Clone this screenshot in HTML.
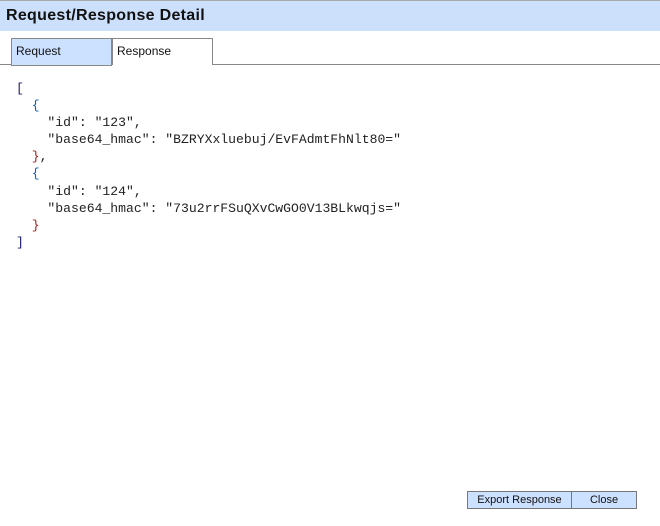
<!DOCTYPE html>
<html><head><style>
body{margin:0;width:660px;height:526px;background:#fff;position:relative;overflow:hidden;font-family:"Liberation Sans",sans-serif}
.hdr{position:absolute;left:0;top:0;width:660px;height:31px;background:#cde0fb;border-top:1px solid #a8a8a8;box-sizing:border-box}
.hdr span{position:absolute;left:6px;top:6px;font-size:16px;font-weight:bold;color:#111;letter-spacing:0.3px}
.line{position:absolute;left:0;top:64px;width:660px;height:1px;background:#888}
.tab{position:absolute;top:38px;height:28px;box-sizing:border-box;border:1px solid #888;font-size:12px;padding:5px 0 0 4px;color:#111}
.t1{left:11px;width:101px;background:#cce0ff}
.t2{left:112px;width:101px;background:#fff;border-bottom:none;height:27px}
pre{position:absolute;left:16px;top:80px;margin:0;font-family:"Liberation Mono",monospace;font-size:13.1px;line-height:17.1px;color:#222}
.a{color:#1c1c6c}.b{color:#1060b0}.c{color:#a02020}
.btn{position:absolute;top:491px;height:18px;box-sizing:border-box;border:1px solid #777;background:#cce0ff;font-size:11px;text-align:center;line-height:16px;color:#111}
</style></head><body>
<div class="hdr"><span>Request/Response Detail</span></div>
<div class="line"></div>
<div class="tab t1">Request</div>
<div class="tab t2">Response</div>
<pre><span class="a">[</span>
  <span class="b">{</span>
    "id": "123",
    "base64_hmac": "BZRYXxluebuj/EvFAdmtFhNlt80="
  <span class="c">}</span>,
  <span class="b">{</span>
    "id": "124",
    "base64_hmac": "73u2rrFSuQXvCwGO0V13BLkwqjs="
  <span class="c">}</span>
<span class="a">]</span></pre>
<div class="btn" style="left:467px;width:105px">Export Response</div>
<div class="btn" style="left:571px;width:66px">Close</div>
</body></html>
